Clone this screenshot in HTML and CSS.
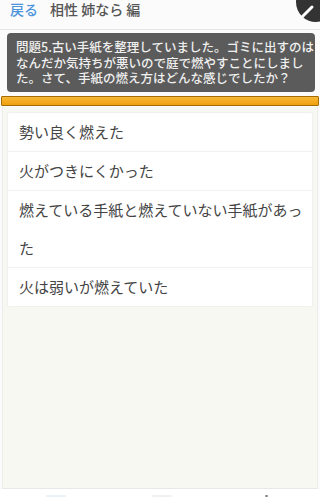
FILE: index.html
```html
<!DOCTYPE html>
<html lang="ja">

<head>
  <title>相性 姉なら 編</title>
  <meta name="viewport" content="width=device-width, initial-scale=1.0">
  <link rel="stylesheet" href="styles.css">
</head>

<body>
  <div class="header">
    <a class="back" href="#">戻る</a>
    <span class="title">相性 姉なら 編</span>
  </div>
  <svg class="closeBtn" width="26" height="22" viewBox="0 0 26 22">
    <circle cx="22" cy="2" r="20" fill="#333333" />
    <path d="M8 17 L18 7" stroke="#ffffff" stroke-width="3" stroke-linecap="round" />
  </svg>

  <div class="question">問題5.古い手紙を整理していました。ゴミに出すのはなんだか気持ちが悪いので庭で燃やすことにしました。さて、手紙の燃え方はどんな感じでしたか？</div>

  <div class="progress"></div>

  <div class="content">
    <ul class="answers">
      <li>勢い良く燃えた</li>
      <li>火がつきにくかった</li>
      <li>燃えている手紙と燃えていない手紙があった</li>
      <li>火は弱いが燃えていた</li>
    </ul>
  </div>

  <div class="tabbar">
    <span class="tab blue"></span>
    <span class="tab gray"></span>
    <span class="tab dark"></span>
  </div>
</body>

</html>
```

FILE: styles.css
```css
body {
  margin: 0;
  background-color: #fbfbfb;
  font-family: "Noto Sans CJK JP", "Noto Sans", sans-serif;
  height: 497px;
  display: flex;
  flex-direction: column;
  overflow: hidden;
}

.header {
  height: 30px;
  border-bottom: 1px solid #e6e6e6;
  display: flex;
  align-items: center;
  padding-left: 10px;
  padding-bottom: 12px;
  box-sizing: border-box;
  font-size: 14px;
  font-weight: 500;
  gap: 12px;
}

.back {
  color: #4d94dc;
  text-decoration: none;
}

.title {
  color: #555555;
}

.closeBtn {
  position: absolute;
  top: 0;
  right: 0;
}

.question {
  margin: 3px 5px 0 7px;
  padding: 6px 0 6px 9px;
  background-color: #5b5b5b;
  border-radius: 4px;
  color: #f0f0f0;
  font-size: 12.5px;
  font-weight: 500;
  line-height: 15.5px;
}

.progress {
  margin: 4px 1px 0 1px;
  height: 8px;
  border: 1px solid #a46b00;
  border-radius: 1px;
  background: linear-gradient(#f7b736, #f0a010);
}

.content {
  flex: 1;
  margin: 1px 2px 0 2px;
  border-left: 1px solid #ececec;
  border-right: 1px solid #ececec;
  border-bottom: 1px solid #e8e8e8;
  background-color: #f8f8f3;
  padding: 5px 4px 0 4px;
}

.answers {
  list-style: none;
  margin: 0;
  padding: 0;
  background-color: #ffffff;
  border: 1px solid #f0f0ec;
  border-radius: 2px;
}

.answers li {
  padding-left: 11px;
  font-size: 15px;
  line-height: 38px;
  color: #444444;
  border-top: 1px solid #f1f1f1;
}

.answers li:first-child {
  border-top: none;
}

.tabbar {
  height: 8px;
  background-color: #ffffff;
  position: relative;
}

.tab {
  position: absolute;
  top: 6px;
  height: 2px;
  width: 20px;
  border-radius: 1px;
}

.tab.blue {
  left: 46px;
  background-color: #eaf1fb;
}

.tab.gray {
  left: 152px;
  background-color: #f0f0f0;
}

.tab.dark {
  left: 265px;
  width: 3px;
  background-color: #888888;
}
```
